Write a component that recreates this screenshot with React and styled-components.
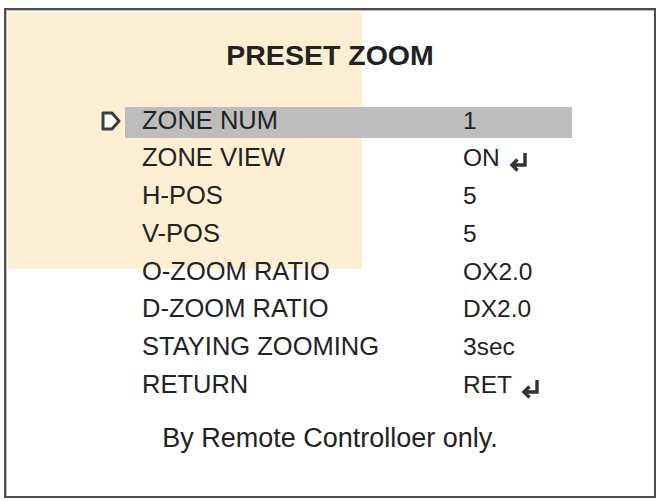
import React from 'react';
import styled, { createGlobalStyle } from 'styled-components';

const GlobalStyle = createGlobalStyle`
  html, body {
    margin: 0;
    padding: 0;
    background: #ffffff;
  }
  body {
    font-family: "Liberation Sans", Arial, sans-serif;
    color: #222;
  }
`;

const Page = styled.div`
  width: 659px;
  height: 501px;
  padding: 8px 3px 0 4px;
  box-sizing: border-box;
`;

const Frame = styled.div`
  position: relative;
  width: 652px;
  height: 490px;
  box-sizing: border-box;
  border: 2px solid #4d4d4d;
  box-shadow: inset 1px 1px 0 #bdbdbd;
  display: flex;
  flex-direction: column;
  align-items: center;
`;

// peach highlight that sits behind the upper-left of the menu
const Tint = styled.div`
  position: absolute;
  left: 2px;
  top: 2px;
  width: 354px;
  height: 257px;
  background: #fcefd3;
  z-index: 0;
`;

const Content = styled.div`
  position: relative;
  z-index: 1;
  width: 100%;
  display: flex;
  flex-direction: column;
`;

const Title = styled.h1`
  margin: 29px 0 0;
  font-size: 28.5px;
  line-height: 32px;
  font-weight: 700;
  text-align: center;
  color: #222;
`;

const List = styled.div`
  display: flex;
  flex-direction: column;
  gap: 6.8px;
  margin: 36px 0 0 94px;
`;

const Row = styled.div`
  display: flex;
  align-items: center;
  height: 31px;
`;

const Marker = styled.div`
  width: 25px;
  height: 31px;
  display: flex;
  align-items: center;
  justify-content: flex-start;
`;

const Bar = styled.div`
  width: 447px;
  height: 31px;
  display: flex;
  align-items: center;
  padding-left: 17px;
  box-sizing: border-box;
  background: ${p => (p.$active ? '#bdbdbd' : 'transparent')};
`;

const Label = styled.span`
  width: 321px;
  font-size: 25.5px;
  line-height: 28px;
  margin-top: -6px;
  color: #222;
  white-space: nowrap;
`;

const Value = styled.span`
  display: flex;
  align-items: center;
  gap: 7px;
  font-size: 24.5px;
  line-height: 28px;
  margin-top: -4px;
  color: #222;
`;

const Note = styled.p`
  margin: 20px 0 0;
  text-align: center;
  font-size: 27px;
  line-height: 30px;
  color: #222;
`;

const Pointer = () => (
  <svg width="22" height="22" viewBox="0 0 22 22" style={{ marginTop: -4 }}>
    <path
      d="M3 3 H12 L19 11 L12 19 H3 Z"
      fill="#ffffff"
      stroke="#3c3c3c"
      strokeWidth="3"
      strokeLinejoin="round"
    />
  </svg>
);

const EnterIcon = () => (
  <svg width="22" height="22" viewBox="0 0 22 22" style={{ marginTop: 10 }}>
    <path d="M18 1 V13 H6" fill="none" stroke="#333" strokeWidth="3.4" />
    <path d="M10.5 7.5 L5 13 L10.5 18.5" fill="none" stroke="#333" strokeWidth="3.4" />
  </svg>
);

const items = [
  { label: 'ZONE NUM', value: '1', active: true },
  { label: 'ZONE VIEW', value: 'ON', enter: true },
  { label: 'H-POS', value: '5' },
  { label: 'V-POS', value: '5' },
  { label: 'O-ZOOM RATIO', value: 'OX2.0' },
  { label: 'D-ZOOM RATIO', value: 'DX2.0' },
  { label: 'STAYING ZOOMING', value: '3sec' },
  { label: 'RETURN', value: 'RET', enter: true },
];

export default function App() {
  return (
    <Page>
      <GlobalStyle />
      <Frame>
        <Tint />
        <Content>
          <Title>PRESET ZOOM</Title>
          <List>
            {items.map(item => (
              <Row key={item.label}>
                <Marker>{item.active && <Pointer />}</Marker>
                <Bar $active={item.active}>
                  <Label>{item.label}</Label>
                  <Value>
                    {item.value}
                    {item.enter && <EnterIcon />}
                  </Value>
                </Bar>
              </Row>
            ))}
          </List>
          <Note>By Remote Controlloer only.</Note>
        </Content>
      </Frame>
    </Page>
  );
}
